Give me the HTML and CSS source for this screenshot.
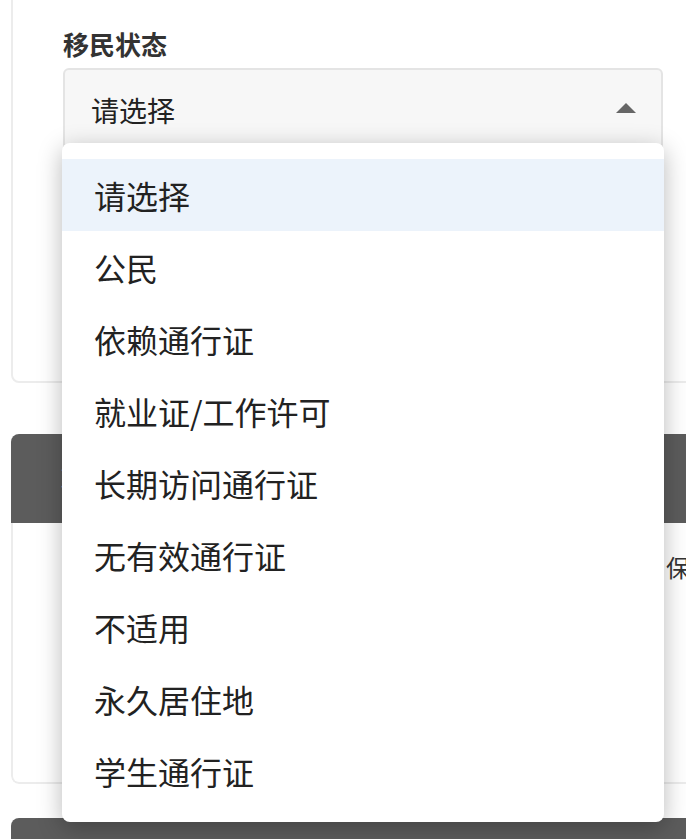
FILE: index.html
```html
<!DOCTYPE html>
<html lang="zh-CN">
<head>
    <meta charset="UTF-8">
    <title>移民状态</title>
    <link rel="stylesheet" href="styles.css">
</head>
<body>
<div class="page">
    <div class="card card-top">
        <div class="field">
            <label class="field-label">移民状态</label>
            <div class="select" id="select">
                <span class="select-value">请选择</span>
                <span class="select-arrow"></span>
            </div>
        </div>
    </div>

    <div class="card card-mid">
        <div class="card-head">联系方式</div>
        <div class="card-body">
            <div class="info-row">
                <span class="info-label">请填写以下信息</span>
                <span class="info-text">保密</span>
            </div>
        </div>
    </div>

    <div class="card card-bottom">
        <div class="card-head">其他信息</div>
    </div>

    <ul class="dropdown" id="dropdown">
        <li class="active">请选择</li>
        <li>公民</li>
        <li>依赖通行证</li>
        <li>就业证/工作许可</li>
        <li>长期访问通行证</li>
        <li>无有效通行证</li>
        <li>不适用</li>
        <li>永久居住地</li>
        <li>学生通行证</li>
    </ul>
</div>
</body>
</html>
```

FILE: styles.css
```css
html, body {
    margin: 0;
    padding: 0;
    background: #fff;
    overflow: hidden;
}

body {
    font-family: "Noto Sans CJK SC", "Noto Sans", sans-serif;
    color: #333;
}

.page {
    position: relative;
    display: flow-root;
    width: 760px;
    padding-left: 11px;
}

.card {
    border: 2px solid #ececec;
    border-radius: 8px;
    background: #fff;
    overflow: hidden;
}

.card-top {
    margin-top: -30px;
    height: 413px;
    box-sizing: border-box;
    padding: 54px 0 0 50px;
}

.field-label {
    display: block;
    font-size: 26px;
    font-weight: bold;
    line-height: 36px;
    color: #333;
}

.select {
    margin-top: 6px;
    width: 600px;
    height: 84px;
    box-sizing: border-box;
    border: 2px solid #e4e4e4;
    border-radius: 6px;
    background: #f7f7f7;
    display: flex;
    align-items: center;
    justify-content: space-between;
    padding: 0 25px 0 26px;
}

.select-value {
    font-size: 28px;
    color: #222;
}

.select-arrow {
    width: 0;
    height: 0;
    border-left: 10px solid transparent;
    border-right: 10px solid transparent;
    border-bottom: 10px solid #666;
    margin-top: -4px;
}

.card-mid {
    margin-top: 51px;
    border: none;
}

.card-head {
    background: #5c5c5c;
    color: #fff;
    height: 89px;
    line-height: 89px;
    padding-left: 50px;
    font-size: 24px;
}

.card-body {
    border: 2px solid #ececec;
    border-top: none;
    border-radius: 0 0 8px 8px;
    height: 261px;
    padding: 22px 0 0 50px;
    box-sizing: border-box;
}

.info-row {
    display: grid;
    grid-template-columns: 603px 1fr;
    font-size: 24px;
    line-height: 44px;
    color: #333;
}

.card-bottom {
    margin-top: 34px;
    border: none;
}

.dropdown {
    position: absolute;
    top: 143px;
    left: 62px;
    width: 602px;
    margin: 0;
    padding: 16px 0 15px;
    list-style: none;
    background: #fff;
    border-radius: 8px;
    box-shadow: 0 6px 24px rgba(0, 0, 0, 0.28);
}

.dropdown li {
    height: 72px;
    line-height: 72px;
    padding-left: 32px;
    font-size: 32px;
    color: #222;
}

.dropdown .active {
    background: #ecf3fb;
}
```
